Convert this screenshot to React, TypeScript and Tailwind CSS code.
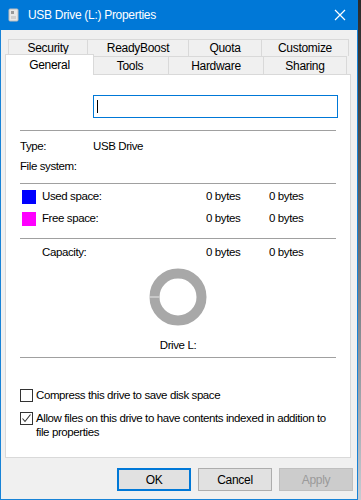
import React from "react";

const font = { fontFamily: '"Segoe UI", "Liberation Sans", Arial, sans-serif' };

function Tab({ label, w, active, h }: { label: string; w: number; active?: boolean; h: number }) {
  return (
    <div
      style={{ width: w, height: active ? h + 2 : h }}
      className={
        active
          ? "-mt-[2px] -ml-[2px] -mr-[2px] bg-white border border-[#d9d9d9] border-b-0 flex items-center justify-center relative z-10 text-black"
          : "bg-[#f0f0f0] border border-[#d9d9d9] border-b-0 flex items-center justify-center text-black -ml-px first:ml-0"
      }
    >
      {label}
    </div>
  );
}

function Sep() {
  return <div className="h-px bg-[#a0a0a0] mx-[14px]" />;
}

export default function App() {
  return (
    <div
      className="w-[361px] h-[500px] flex bg-[#f0f0f0] overflow-hidden text-[11.5px] tracking-[-0.4px]"
      style={font}
    >
      <div className="w-[358px] h-[500px] flex flex-col bg-[#f0f0f0] border-l border-r border-b border-[#1883d7]">
        {/* Title bar */}
        <div className="h-[30px] bg-[#0078d7] flex items-center pl-[7px] pr-[12px] shrink-0 -mx-px">
          <svg width="12" height="14" viewBox="0 0 12 14" className="ml-[1px]">
            <rect x="1" y="1" width="9" height="12" rx="1" fill="#e8e8e8" stroke="#bcbcbc" />
            <rect x="3" y="3" width="3" height="3" fill="#9a9a9a" />
            <rect x="3" y="8" width="5" height="3" fill="#cfcfcf" />
          </svg>
          <span className="ml-[8px] text-white text-[12px] tracking-[-0.3px]">USB Drive (L:) Properties</span>
          <div className="flex-1" />
          <svg width="12" height="12" viewBox="0 0 12 12">
            <path d="M1 1 L11 11 M11 1 L1 11" stroke="white" strokeWidth="1.2" />
          </svg>
        </div>

        {/* Tabs */}
        <div className="pt-[9px] pl-[6px] pr-[8px] text-[12px] tracking-[-0.3px]">
          <div className="flex ml-[1px]">
            <Tab label="Security" w={80} h={17} />
            <Tab label="ReadyBoost" w={102} h={17} />
            <Tab label="Quota" w={74} h={17} />
            <Tab label="Customize" w={88} h={17} />
          </div>
          <div className="flex">
            <Tab label="General" w={89} h={19} active />
            <Tab label="Tools" w={78} h={19} />
            <Tab label="Hardware" w={96} h={19} />
            <Tab label="Sharing" w={84} h={19} />
          </div>
        </div>

        {/* Panel */}
        <div className="mx-[4px] mr-[6px] h-[384px] bg-white border border-[#d9d9d9] -mt-px text-black flex flex-col">
          <div className="pt-[20px] pl-[87px] pr-[12px]">
            <div className="h-[23px] border border-[#0078d7] flex items-center pl-[3px]">
              <div className="w-px h-[13px] bg-black" />
            </div>
          </div>
          <div className="mt-[12px]">
            <Sep />
          </div>
          <div className="flex items-center h-[20px] mt-[6px] pl-[14px]">
            <span className="w-[73px]">Type:</span>
            <span>USB Drive</span>
          </div>
          <div className="flex items-center h-[20px] pl-[14px]">
            <span>File system:</span>
          </div>
          <div className="mt-[6px]">
            <Sep />
          </div>
          <div className="flex items-center h-[20px] mt-[3px] pl-[16px]">
            <div className="w-[14px] h-[14px] bg-[#0000ff]" />
            <span className="ml-[6px] w-[164px]">Used space:</span>
            <span className="w-[63px]">0 bytes</span>
            <span>0 bytes</span>
          </div>
          <div className="flex items-center h-[20px] mt-[2px] pl-[16px]">
            <div className="w-[14px] h-[14px] bg-[#ff00ff]" />
            <span className="ml-[6px] w-[164px]">Free space:</span>
            <span className="w-[63px]">0 bytes</span>
            <span>0 bytes</span>
          </div>
          <div className="mt-[9px]">
            <Sep />
          </div>
          <div className="flex items-center h-[20px] mt-[4px] pl-[36px]">
            <span className="w-[164px]">Capacity:</span>
            <span className="w-[63px]">0 bytes</span>
            <span>0 bytes</span>
          </div>
          <div className="flex justify-center mt-[5px]">
            <svg width="58" height="58" viewBox="0 0 58 58">
              <circle cx="29" cy="29" r="23.5" fill="none" stroke="#a8a8a8" strokeWidth="10" />
              <line x1="0" y1="29" x2="10" y2="29" stroke="#e8e8e8" strokeWidth="1" />
            </svg>
          </div>
          <div className="flex justify-center mt-[11px] h-[18px] items-center">Drive L:</div>
          <div className="mt-[2px]">
            <Sep />
          </div>
          <div className="flex items-center mt-[30px] pl-[14px] h-[15px] whitespace-nowrap">
            <div className="w-[13px] h-[13px] border border-[#333333] bg-white" />
            <span className="ml-[3px]">Compress this drive to save disk space</span>
          </div>
          <div className="flex items-start mt-[8px] pl-[14px] whitespace-nowrap">
            <div className="w-[13px] h-[13px] border border-[#333333] bg-white mt-[1px] shrink-0 flex items-center justify-center">
              <svg width="11" height="11" viewBox="0 0 11 11">
                <path d="M1.5 5.5 L4 8.5 L9.5 1.5" fill="none" stroke="#333" strokeWidth="1.1" />
              </svg>
            </div>
            <span className="ml-[3px] leading-[14px]">
              Allow files on this drive to have contents indexed in addition to
              <br />
              file properties
            </span>
          </div>
        </div>

        {/* Buttons */}
        <div className="flex justify-end gap-[7px] pr-[4px] mt-[10px] text-[12px] tracking-[-0.3px]">
          <div className="w-[74px] h-[23px] bg-[#e1e1e1] border-2 border-[#0078d7] flex items-center justify-center text-black">OK</div>
          <div className="w-[74px] h-[23px] bg-[#e1e1e1] border border-[#adadad] flex items-center justify-center text-black">Cancel</div>
          <div className="w-[74px] h-[23px] bg-[#cccccc] border border-[#bfbfbf] flex items-center justify-center text-[#9a9a9a]">Apply</div>
        </div>
      </div>
      <div className="w-[3px] h-[500px] bg-gradient-to-b from-[#2a2a2a] via-[#6b6f75] to-[#c6ccd3]" />
    </div>
  );
}
